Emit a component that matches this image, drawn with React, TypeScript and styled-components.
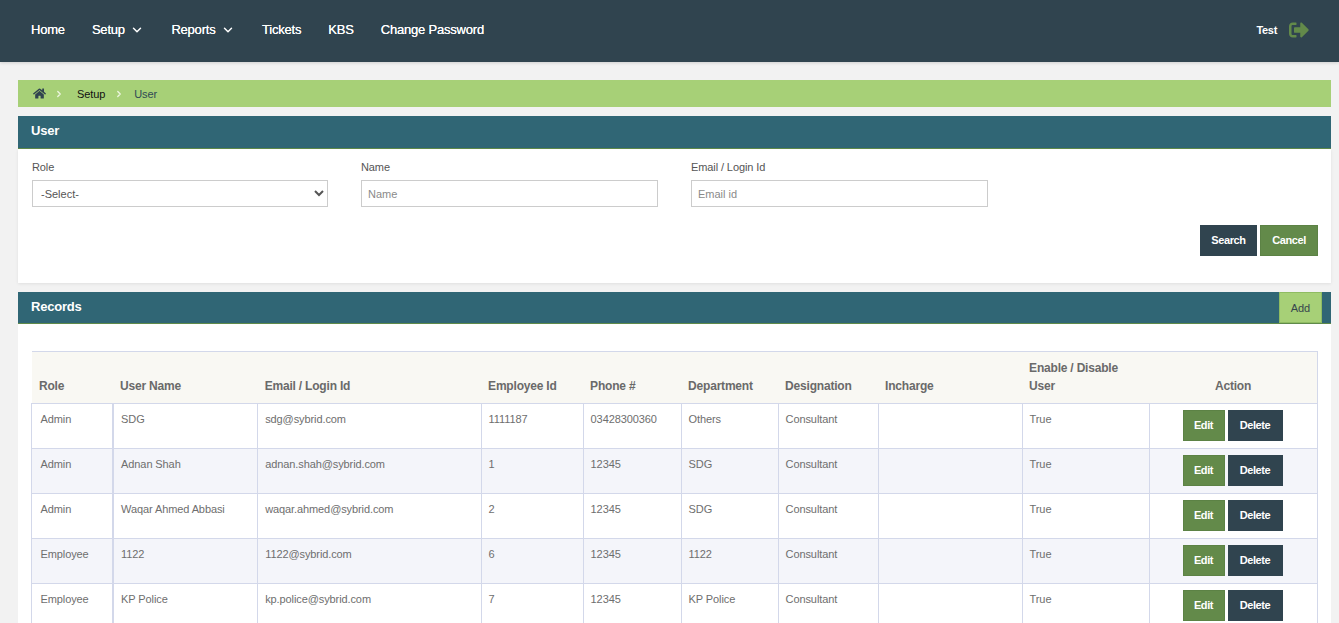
import React from 'react';
import styled, { createGlobalStyle } from 'styled-components';
import { FaHome, FaSignOutAlt } from 'react-icons/fa';
import { ChevronDown, ChevronRight } from 'lucide-react';

const GlobalStyle = createGlobalStyle`
  html, body {
    margin: 0;
    height: 623px;
    overflow: hidden;
    background: #f2f2f2;
    font-family: "Liberation Sans", Arial, sans-serif;
  }
  * { box-sizing: border-box; }
`;

const Header = styled.header`
  height: 62px;
  background: #30444f;
  display: flex;
  align-items: center;
  justify-content: space-between;
  padding: 0 30px 3px 31px;
  box-shadow: 0 1px 3px rgba(0, 0, 0, 0.15);
`;
const Nav = styled.nav`
  display: flex;
  align-items: center;
  gap: 27px;
  margin-bottom: 1px;
`;
const NavItem = styled.a`
  display: flex;
  align-items: center;
  gap: 5px;
  color: #fff;
  font-size: 13px;
  letter-spacing: -0.2px;
  text-shadow: 0 0 0.4px #fff;
  svg { margin: 1px 0 0 0.5px; }
`;
const UserBox = styled.div`
  display: flex;
  align-items: center;
  gap: 12px;
  color: #fff;
  font-size: 11px;
  font-weight: bold;
  letter-spacing: -0.3px;
  svg { color: #638a4a; }
`;

const Main = styled.main`
  padding: 18px 8px 0 18px;
`;
const Breadcrumb = styled.div`
  height: 27px;
  background: #a7d077;
  display: flex;
  align-items: center;
  padding-left: 15px;
  font-size: 11px;
  letter-spacing: -0.1px;
  color: #111;
  margin-bottom: 9px;
`;
const Sep = styled(ChevronRight)`
  color: #eef6e0;
  margin: 0 13px 0 8px;
`;
const SepSmall = styled(Sep)`
  margin: 0 10px 0 9px;
`;
const Crumb = styled.span<{ $current?: boolean }>`
  color: ${({ $current }) => ($current ? '#2f4a55' : '#111')};
`;

const PanelHeader = styled.div<{ $h: number }>`
  height: ${({ $h }) => $h}px;
  background: #306675;
  border-bottom: 1px solid #5f8a4a;
  display: flex;
  align-items: center;
  justify-content: space-between;
  padding: 0 9px 3px 13px;
  color: #fff;
  font-size: 13px;
  font-weight: bold;
  letter-spacing: -0.2px;
`;
const AddButton = styled.button`
  width: 43px;
  height: 31px;
  align-self: flex-start;
  background: #a7d077;
  border: 1px solid #8fbc62;
  color: #36464e;
  font: 11px "Liberation Sans", Arial, sans-serif;
  letter-spacing: -0.1px;
  padding: 0;
`;
const FilterBody = styled.div`
  background: #fff;
  height: 134px;
  padding: 12px 13px 0 14px;
  margin-bottom: 9px;
  box-shadow: 0 1px 3px rgba(0, 0, 0, 0.08);
`;
const FilterRow = styled.div`
  display: flex;
  gap: 33px;
`;
const Field = styled.label<{ $w: number }>`
  display: flex;
  flex-direction: column;
  width: ${({ $w }) => $w}px;
  gap: 6px;
  font-size: 11px;
  letter-spacing: -0.1px;
  line-height: 13px;
  color: #555;
`;
const sharedControl = `
  height: 27px;
  width: 100%;
  border: 1px solid #ccc;
  background: #fff;
  font-family: "Liberation Sans", Arial, sans-serif;
  font-size: 11px;
  color: #555;
  outline: none;
`;
const Select = styled.select`
  ${sharedControl}
  padding-left: 4px;
`;
const Input = styled.input`
  ${sharedControl}
  padding: 0 6px;
  &::placeholder { color: #8a8a8a; opacity: 1; }
`;
const ButtonRow = styled.div`
  display: flex;
  justify-content: flex-end;
  gap: 3px;
  margin-top: 18px;
`;
const Btn = styled.button<{ $variant: 'dark' | 'green'; $w: number }>`
  height: 31px;
  padding: 0 0 1px;
  width: ${({ $w }) => $w}px;
  background: ${({ $variant }) => ($variant === 'dark' ? '#30444f' : '#638a4a')};
  border: 1px solid ${({ $variant }) => ($variant === 'dark' ? '#30444f' : '#5c8245')};
  color: #fff;
  font: bold 11px "Liberation Sans", Arial, sans-serif;
  letter-spacing: -0.4px;
`;

const RecordsBody = styled.div`
  background: #fff;
  padding: 27px 13px 0 13px;
`;
const Table = styled.table`
  width: 1286px;
  table-layout: fixed;
  border-collapse: collapse;
  font-size: 11px;
  letter-spacing: -0.1px;
  color: #6e6e6e;
`;
const Th = styled.th<{ $center?: boolean }>`
  height: 52px;
  background: #f9f8f3;
  border-top: 1px solid #d3d8ea;
  border-bottom: 1px solid #d3d8ea;
  padding: 6px 7px 8px 6.6px;
  font-size: 12px;
  letter-spacing: -0.2px;
  line-height: 18px;
  font-weight: bold;
  color: #6a6a6a;
  vertical-align: bottom;
  text-align: ${({ $center }) => ($center ? 'center' : 'left')};
  &:first-child { padding-left: 7.5px; }
  &:nth-child(2) { padding-left: 7.6px; }
  &:nth-child(3) { padding-left: 7.2px; }
  &:last-child { border-right: 1px solid #d3d8ea; }
`;
const Tr = styled.tr`
  height: 45px;
  &:nth-child(even) td { background: #f4f5fa; }
`;
const Td = styled.td`
  border: 1px solid #d3d8ea;
  padding: 9px 7px 0 6.6px;
  vertical-align: top;
  line-height: 13px;
  &:first-child { padding-left: 8.5px; border-right-width: 2px; }
  &:nth-child(2) { padding-left: 7.6px; }
  &:nth-child(3) { padding-left: 7.2px; }
`;
const ActionCell = styled(Td)`
  padding: 6px 2px 0 0;
`;
const Actions = styled.div`
  display: flex;
  justify-content: center;
  gap: 3px;
`;

const widths = [81, 145, 224, 102, 98, 97, 100, 144, 127, 168];
const columns = ['Role', 'User Name', 'Email / Login Id', 'Employee Id', 'Phone #', 'Department', 'Designation', 'Incharge', 'Enable / Disable User'];
const rows = [
  ['Admin', 'SDG', 'sdg@sybrid.com', '1111187', '03428300360', 'Others', 'Consultant', '', 'True'],
  ['Admin', 'Adnan Shah', 'adnan.shah@sybrid.com', '1', '12345', 'SDG', 'Consultant', '', 'True'],
  ['Admin', 'Waqar Ahmed Abbasi', 'waqar.ahmed@sybrid.com', '2', '12345', 'SDG', 'Consultant', '', 'True'],
  ['Employee', '1122', '1122@sybrid.com', '6', '12345', '1122', 'Consultant', '', 'True'],
  ['Employee', 'KP Police', 'kp.police@sybrid.com', '7', '12345', 'KP Police', 'Consultant', '', 'True'],
];

export default function App() {
  return (
    <>
      <GlobalStyle />
      <Header>
        <Nav>
          <NavItem>Home</NavItem>
          <NavItem>Setup <ChevronDown size={14} strokeWidth={2.5} /></NavItem>
          <NavItem>Reports <ChevronDown size={14} strokeWidth={2.5} /></NavItem>
          <NavItem>Tickets</NavItem>
          <NavItem>KBS</NavItem>
          <NavItem>Change Password</NavItem>
        </Nav>
        <UserBox>
          Test <FaSignOutAlt size={20} />
        </UserBox>
      </Header>
      <Main>
        <Breadcrumb>
          <FaHome size={13} color="#30444f" />
          <Sep size={10} strokeWidth={3} />
          <Crumb>Setup</Crumb>
          <SepSmall size={10} strokeWidth={3} />
          <Crumb $current>User</Crumb>
        </Breadcrumb>

        <PanelHeader $h={33}>User</PanelHeader>
        <FilterBody>
          <FilterRow>
            <Field $w={296}>
              Role
              <Select defaultValue="">
                <option value="">-Select-</option>
              </Select>
            </Field>
            <Field $w={297}>
              Name
              <Input placeholder="Name" />
            </Field>
            <Field $w={297}>
              Email / Login Id
              <Input placeholder="Email id" />
            </Field>
          </FilterRow>
          <ButtonRow>
            <Btn $variant="dark" $w={57}>Search</Btn>
            <Btn $variant="green" $w={58}>Cancel</Btn>
          </ButtonRow>
        </FilterBody>

        <PanelHeader $h={32}>
          Records
          <AddButton>Add</AddButton>
        </PanelHeader>
        <RecordsBody>
          <Table>
            <colgroup>
              {widths.map((w, i) => (
                <col key={i} style={{ width: w }} />
              ))}
            </colgroup>
            <thead>
              <tr>
                {columns.map((c) => (
                  <Th key={c}>{c}</Th>
                ))}
                <Th $center>Action</Th>
              </tr>
            </thead>
            <tbody>
              {rows.map((row) => (
                <Tr key={row[2]}>
                  {row.map((cell, i) => (
                    <Td key={i}>{cell}</Td>
                  ))}
                  <ActionCell>
                    <Actions>
                      <Btn $variant="green" $w={42}>Edit</Btn>
                      <Btn $variant="dark" $w={55}>Delete</Btn>
                    </Actions>
                  </ActionCell>
                </Tr>
              ))}
            </tbody>
          </Table>
        </RecordsBody>
      </Main>
    </>
  );
}
